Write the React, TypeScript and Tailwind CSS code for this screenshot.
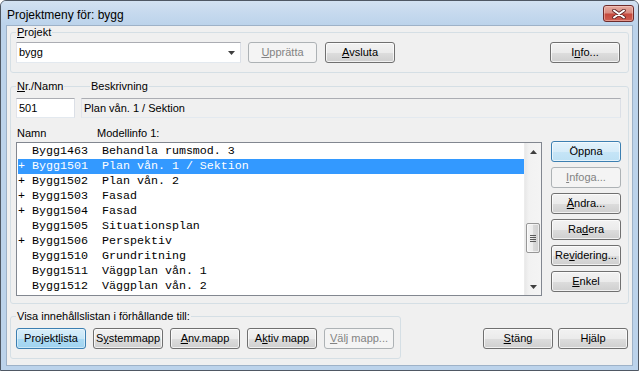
import React from "react";

const SANS = "font-['Liberation_Sans',Arial,sans-serif]";
const MONO = "font-['Liberation_Mono','Courier_New',monospace]";

type BtnProps = {
  children: React.ReactNode;
  w?: string;
  variant?: "normal" | "primary" | "focus" | "disabled";
};

function Btn({ children, w = "w-[70px]", variant = "normal" }: BtnProps) {
  const base =
    "h-[21px] shrink-0 flex items-center justify-center rounded-[3px] border text-[11px] leading-[13px]";
  const v =
    variant === "primary"
      ? "border-[#3c7fb1] text-black bg-[linear-gradient(to_bottom,#e3f2fb_0%,#d6ecf9_50%,#c6e5f7_51%,#bde0f4_100%)] shadow-[inset_0_0_0_1px_rgba(255,255,255,0.6)]"
      : variant === "focus"
      ? "border-[#3c7fb1] text-black bg-[linear-gradient(to_bottom,#d9eefa_0%,#c6e6f8_50%,#abdaf3_51%,#a0d3f0_100%)] shadow-[inset_0_0_0_1px_rgba(255,255,255,0.45)]"
      : variant === "disabled"
      ? "border-[#adb2b5] text-[#838383] bg-[#f4f4f4]"
      : "border-[#707070] text-black bg-[linear-gradient(to_bottom,#f2f2f2_0%,#ebebeb_50%,#dddddd_51%,#cfcfcf_100%)] shadow-[inset_0_0_0_1px_rgba(255,255,255,0.7)]";
  return <div className={`${base} ${v} ${w}`}>{children}</div>;
}

function GLabel({ children, left }: { children: React.ReactNode; left: string }) {
  return (
    <span
      className={`absolute top-[-7px] ${left} px-[1px] bg-[#f0f0f0] text-[11px] leading-[13px] text-black whitespace-nowrap`}
    >
      {children}
    </span>
  );
}

const rows: [string, string, string][] = [
  ["", "Bygg1463", "Behandla rumsmod. 3"],
  ["+", "Bygg1501", "Plan vån. 1 / Sektion"],
  ["+", "Bygg1502", "Plan vån. 2"],
  ["+", "Bygg1503", "Fasad"],
  ["+", "Bygg1504", "Fasad"],
  ["", "Bygg1505", "Situationsplan"],
  ["+", "Bygg1506", "Perspektiv"],
  ["", "Bygg1510", "Grundritning"],
  ["", "Bygg1511", "Väggplan vån. 1"],
  ["", "Bygg1512", "Väggplan vån. 2"],
];

function Arrow({ up }: { up?: boolean }) {
  return (
    <svg width="7" height="4" viewBox="0 0 7 4">
      {up ? (
        <polygon points="3.5,0 7,4 0,4" fill="#3f3f3f" />
      ) : (
        <polygon points="0,0 7,0 3.5,4" fill="#3f3f3f" />
      )}
    </svg>
  );
}

function Scrollbar() {
  return (
    <div className="w-[17px] shrink-0 flex flex-col bg-[linear-gradient(to_right,#e8e8e8_0%,#f2f2f2_25%,#f4f4f4_100%)] border-l border-[#ececec]">
      <div className="h-[17px] flex items-center justify-center">
        <Arrow up />
      </div>
      <div className="h-[63px]" />
      <div className="h-[30px] mx-[1px] rounded-[2px] border border-[#979797] bg-[linear-gradient(to_right,#f4f4f4_0%,#ececec_50%,#dadada_51%,#d0d0d0_100%)] shadow-[inset_0_0_0_1px_rgba(255,255,255,0.6)] flex flex-col items-center justify-center gap-[1px]">
        <div className="w-[6px] h-[1px] bg-[#5a5a5a]" />
        <div className="w-[6px] h-[1px] bg-[#5a5a5a]" />
        <div className="w-[6px] h-[1px] bg-[#5a5a5a]" />
        <div className="w-[6px] h-[1px] bg-[#5a5a5a]" />
      </div>
      <div className="flex-1" />
      <div className="h-[17px] flex items-center justify-center">
        <Arrow />
      </div>
    </div>
  );
}

export default function App() {
  return (
    <div
      className={`${SANS} w-[639px] h-[371px] flex flex-col border border-[#4f5864] rounded-t-[6px] bg-[#bcd3eb] overflow-hidden`}
    >
      {/* Title bar */}
      <div className="h-[24px] shrink-0 flex items-start bg-[linear-gradient(to_bottom,#d3e2f2_0%,#c6d9ee_50%,#bcd3eb_100%)]">
        <span className="ml-[6px] mt-[6px] text-[12px] leading-[16px] text-black">
          Projektmeny för: bygg
        </span>
        <div className="ml-auto mr-[4px] mt-[4px] w-[31px] h-[17px] rounded-[3px] border border-[#6e2b2b] bg-[linear-gradient(to_bottom,#e6aba0_0%,#d98d82_45%,#c5493d_55%,#cf5f52_100%)] shadow-[inset_0_0_0_1px_rgba(255,220,210,0.45)] flex items-center justify-center">
          <svg width="14" height="10" viewBox="0 0 14 10">
            <path d="M2 1.5 L12 8.5 M12 1.5 L2 8.5" stroke="#5b2222" strokeWidth="3.6" strokeLinecap="round" />
            <path d="M2 1.5 L12 8.5 M12 1.5 L2 8.5" stroke="#ffffff" strokeWidth="2" strokeLinecap="round" />
          </svg>
        </div>
      </div>

      {/* Client area */}
      <div className="mx-[5px] mb-[4px] flex-1 flex flex-col border border-[#9eb2c8] bg-[#f0f0f0] text-[11px] leading-[13px] text-black">
        {/* Group 1: Projekt */}
        <div className="relative mt-[6px] mx-[3px] rounded-[3px] border border-[#d5dfe5] pl-[5px] pr-[8px] pt-[9px] pb-[9px] flex items-center">
          <GLabel left="left-[5px]">
            <u>P</u>rojekt
          </GLabel>
          <div className="w-[225px] h-[21px] shrink-0 flex items-center bg-white border border-[#abadb3] border-b-[#e3e9ef] border-l-[#e2e3ea] border-r-[#dbdfe6] pl-[2px] pr-[5px]">
            <span>bygg</span>
            <span className="ml-auto flex">
              <Arrow />
            </span>
          </div>
          <div className="ml-[7px]">
            <Btn w="w-[69px]" variant="disabled">
              <u>U</u>pprätta
            </Btn>
          </div>
          <div className="ml-[8px]">
            <Btn>
              <u>A</u>vsluta
            </Btn>
          </div>
          <div className="ml-auto">
            <Btn>
              I<u>n</u>fo...
            </Btn>
          </div>
        </div>

        {/* Group 2 */}
        <div className="relative mt-[13px] mx-[3px] rounded-[3px] border border-[#d5dfe5] pl-[5px] pr-[7px] pt-[11px] pb-[7px] flex flex-col">
          <GLabel left="left-[5px]">
            <u>N</u>r./Namn
          </GLabel>
          <GLabel left="left-[79px]">Beskrivning</GLabel>
          <div className="flex gap-[6px]">
            <div className="w-[59px] h-[20px] shrink-0 flex items-center bg-white border border-[#abadb3] border-b-[#e3e9ef] border-l-[#e2e3ea] border-r-[#dbdfe6] pl-[2px]">
              501
            </div>
            <div className="flex-1 h-[20px] flex items-center bg-[#f0f0f0] border border-[#abadb3] border-b-[#e3e9ef] border-l-[#e2e3ea] border-r-[#dbdfe6] pl-[2px]">
              Plan vån. 1 / Sektion
            </div>
          </div>
          <div className="mt-[9px] h-[13px] flex pl-[1px]">
            <span className="w-[80px]">Namn</span>
            <span>Modellinfo 1:</span>
          </div>
          <div className="mt-[1px] flex items-start gap-[9px]">
            <div className="mt-[1px] flex-1 h-[154px] flex border border-[#828790] bg-white">
              <div className={`${MONO} flex-1 pt-[1px] pl-[1px] text-[11.67px] text-black`}>
                {rows.map(([p, n, d], i) => (
                  <div
                    key={n}
                    className={`h-[15px] leading-[15px] whitespace-pre ${
                      i === 1 ? "bg-[#3399ff] text-white" : ""
                    }`}
                  >
                    {`${p || " "} ${n}  ${d}`}
                  </div>
                ))}
              </div>
              <Scrollbar />
            </div>
            <div className="flex flex-col gap-[5px]">
              <Btn variant="primary">Öppna</Btn>
              <Btn variant="disabled">
                <u>I</u>nfoga...
              </Btn>
              <Btn>
                <u>Ä</u>ndra...
              </Btn>
              <Btn>
                Ra<u>d</u>era
              </Btn>
              <Btn>
                Re<u>v</u>idering...
              </Btn>
              <Btn>
                <u>E</u>nkel
              </Btn>
            </div>
          </div>
        </div>

        {/* Bottom row */}
        <div className="mt-[12px] flex items-start">
          <div className="relative ml-[3px] w-[391px] rounded-[3px] border border-[#d5dfe5] pl-[5px] pt-[11px] pb-[9px] flex gap-[7px]">
            <GLabel left="left-[5px]">Visa innehållslistan i förhållande till:</GLabel>
            <Btn variant="focus">
              Projekt<u>l</u>ista
            </Btn>
            <Btn>
              S<u>y</u>stemmapp
            </Btn>
            <Btn>
              <u>A</u>nv.mapp
            </Btn>
            <Btn>
              A<u>k</u>tiv mapp
            </Btn>
            <Btn variant="disabled">
              <u>V</u>älj mapp...
            </Btn>
          </div>
          <div className="ml-auto mr-[4px] mt-[12px] flex gap-[5px]">
            <Btn>
              <u>S</u>täng
            </Btn>
            <Btn>Hjälp</Btn>
          </div>
        </div>
      </div>
    </div>
  );
}
